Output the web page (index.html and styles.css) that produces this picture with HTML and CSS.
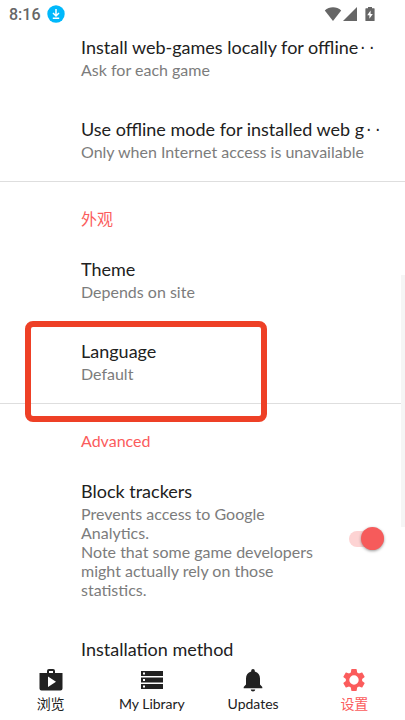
FILE: index.html
```html
<!DOCTYPE html>
<html lang="zh-CN">
<head>
    <meta charset="UTF-8">
    <meta name="viewport" content="width=device-width, initial-scale=1.0">
    <title>设置</title>
    <link rel="stylesheet" href="styles.css">
</head>
<body>
    <header class="status-bar">
        <span class="clock">8:16</span>
        <svg class="download-icon" viewBox="0 0 18 18" aria-hidden="true">
            <circle cx="9" cy="9" r="8.7" fill="#00b8fb"/>
            <path d="M9 4v6.5M6 8l3 3 3-3M5.8 13.2h6.4" fill="none" stroke="#fff" stroke-width="1.5"/>
        </svg>
        <div class="status-icons">
            <svg width="18" height="16" viewBox="0 0 18 16" aria-hidden="true">
                <path d="M9 15 .8 4.400C3 2.200 6 1.200 9 1.200s6 1 8.200 3.200z"/>
            </svg>
            <svg width="16" height="16" viewBox="0 0 16 16" aria-hidden="true">
                <path d="M15 1v14H1z"/>
            </svg>
            <svg class="battery-icon" width="10" height="16" viewBox="0 0 10 16" aria-hidden="true">
                <path d="M1 2.200h2V1h4v1.200h2q.6 0 .6.6v11.600q0 .6-.6.6H1q-.6 0-.6-.6V2.800q0-.6.6-.6z"/>
                <path d="M5.600 4.500 2.200 9.300h2.200v3.500L7.800 8H5.600z" fill="#fff"/>
            </svg>
        </div>
    </header>

    <main class="settings">
        <div class="settings-list">
            <section class="group">
                <div class="item">
                    <div class="item-text">
                        <h3 class="item-title">Install web-games locally for offline<span class="more">··</span></h3>
                        <p class="item-summary">Ask for each game</p>
                    </div>
                </div>
                <div class="item">
                    <div class="item-text">
                        <h3 class="item-title">Use offline mode for installed web g<span class="more">··</span></h3>
                        <p class="item-summary">Only when Internet access is unavailable</p>
                    </div>
                </div>
            </section>

            <section class="group">
                <h2 class="group-title">外观</h2>
                <div class="item">
                    <div class="item-text">
                        <h3 class="item-title">Theme</h3>
                        <p class="item-summary">Depends on site</p>
                    </div>
                </div>
                <div class="item item-marked">
                    <div class="item-text">
                        <h3 class="item-title">Language</h3>
                        <p class="item-summary">Default</p>
                    </div>
                </div>
            </section>

            <section class="group">
                <h2 class="group-title">Advanced</h2>
                <div class="item">
                    <div class="item-text">
                        <h3 class="item-title"><label for="block-trackers">Block trackers</label></h3>
                        <p class="item-summary">Prevents access to Google Analytics.<br>Note that some game developers might actually rely on those statistics.</p>
                    </div>
                    <input class="switch" type="checkbox" role="switch" id="block-trackers" checked>
                </div>
                <div class="item">
                    <div class="item-text">
                        <h3 class="item-title">Installation method</h3>
                    </div>
                </div>
            </section>
        </div>
        <div class="scrollbar"></div>
    </main>

    <nav class="tabs">
        <a class="tab" href="#browse">
            <svg viewBox="0 0 24 24" aria-hidden="true">
                <path fill-rule="evenodd" d="M8 5V3q0-2 2-2h4q2 0 2 2v2h7.500v15.500q0 2-2 2h-19q-2 0-2-2V5zM10 5h4V3h-4zM9 8.500v10.500l8-5.200z"/>
            </svg>
            浏览
        </a>
        <a class="tab" href="#library">
            <svg viewBox="0 0 24 24" aria-hidden="true">
                <path fill-rule="evenodd" d="M1 3h22v5H1zM3 4.500v2h2v-2zM1 9.500h22v5H1zM3 11v2h2v-2zM1 16h22v5H1zM3 17.500v2h2v-2z"/>
            </svg>
            My Library
        </a>
        <a class="tab" href="#updates">
            <svg viewBox="0 0 24 24" aria-hidden="true">
                <path d="M12 23.500c1.200 0 2.200-.8 2.200-2H9.800c0 1.200 1 2 2.200 2zM19 16.500V10.500c0-3.500-1.900-6.200-5.200-7V2.800a1.800 1.800 0 0 0-3.600 0v.7C6.900 4.300 5 7 5 10.500v6l-2.300 2.600v1.200h18.600v-1.200z"/>
            </svg>
            Updates
        </a>
        <a class="tab tab-active" href="#settings" aria-current="page">
            <svg viewBox="1 1 22 22" aria-hidden="true">
                <path d="M19.430 12.980c.04-.32.07-.64.07-.98s-.03-.66-.07-.98l2.110-1.650c.19-.15.24-.42.12-.64l-2-3.460c-.12-.22-.39-.3-.61-.22l-2.490 1c-.52-.4-1.080-.73-1.690-.98l-.38-2.650A.49.49 0 0 0 14 2h-4c-.25 0-.46.18-.49.42l-.38 2.650c-.61.25-1.170.59-1.690.98l-2.490-1c-.23-.09-.49 0-.61.22l-2 3.460c-.13.22-.07.49.12.64l2.110 1.650c-.04.32-.07.65-.07.98s.03.66.07.98l-2.110 1.650c-.19.15-.24.42-.12.64l2 3.460c.12.22.39.3.61.22l2.490-1c.52.4 1.080.73 1.690.98l.38 2.650c.03.24.24.42.49.42h4c.25 0 .46-.18.49-.42l.38-2.650c.61-.25 1.170-.59 1.690-.98l2.490 1c.23.09.49 0 .61-.22l2-3.460c.12-.22.07-.49-.12-.64zM12 16.300a4.300 4.300 0 1 1 0-8.600 4.300 4.300 0 0 1 0 8.600z"/>
            </svg>
            设置
        </a>
    </nav>
</body>
</html>
```

FILE: styles.css
```css
*,
*::before,
*::after {
    margin: 0;
    padding: 0;
    box-sizing: border-box;
}

body {
    font-family: Lato, 'Noto Sans CJK SC', sans-serif;
    background: #fff;
    color: #212121;
    height: 100vh;
    display: flex;
    flex-direction: column;
    overflow: hidden;
}

.status-bar {
    display: flex;
    align-items: center;
    height: 28px;
    padding: 0 30px 0 9px;
    gap: 6px;
    flex-shrink: 0;
}

.clock {
    font-family: Roboto, sans-serif;
    font-size: 16px;
    font-weight: 500;
    color: #666;
}

.download-icon {
    width: 18px;
    height: 18px;
}

.status-icons {
    display: flex;
    margin-left: auto;
    fill: #666;
}

.battery-icon {
    margin-left: 7px;
}

.settings {
    position: relative;
    flex: 1;
    min-height: 0;
    overflow: hidden;
}

/* list is scrolled a little under the status bar */
.settings-list {
    margin-top: -11px;
}

.group + .group {
    border-top: 1px solid #dedede;
}

.group-title {
    padding: 27px 24px 10px 81px;
    font-size: 16px;
    font-weight: 400;
    line-height: 20px;
    color: #fb5c5c;
}

.item {
    display: flex;
    align-items: center;
    gap: 24px;
    padding: 17px 21px 20px 81px;
}

.item-text {
    flex: 1;
    min-width: 0;
}

.item-title {
    font-size: 18px;
    font-weight: 400;
    line-height: 26px;
    white-space: nowrap;
}

.more {
    font-family: 'Liberation Mono', monospace;
    font-size: 15px;
    line-height: 1;
    vertical-align: 2px;
}

.item-summary {
    font-size: 16px;
    line-height: 19px;
    color: #7c7c7c;
}

.item-marked {
    position: relative;
}

.item-marked::after {
    content: "";
    position: absolute;
    top: 0;
    left: 25px;
    width: 242px;
    height: 101px;
    border: 6px solid #ee4026;
    border-radius: 8px;
    z-index: 1;
}

.switch {
    appearance: none;
    position: relative;
    flex-shrink: 0;
    width: 35px;
    height: 16px;
    border-radius: 8px;
    background: #fdd3d3;
    cursor: pointer;
}

.switch::after {
    content: "";
    position: absolute;
    top: -4px;
    left: 0;
    width: 23px;
    height: 23px;
    border-radius: 50%;
    background: #f65b5b;
    box-shadow: 0 1px 3px rgba(0, 0, 0, 0.4);
}

.switch:checked::after {
    left: 12px;
}

.scrollbar {
    position: absolute;
    top: 247px;
    right: 0;
    width: 4px;
    height: 252px;
    background: #f5f5f5;
}

.tabs {
    display: flex;
    flex-shrink: 0;
    height: 60px;
    background: #fff;
}

.tab {
    flex: 1;
    display: flex;
    flex-direction: column;
    align-items: center;
    padding-top: 8px;
    gap: 4px;
    font-size: 14px;
    line-height: 16px;
    color: #212121;
    text-decoration: none;
}

.tab svg {
    width: 24px;
    height: 24px;
    fill: currentColor;
}

.tab-active {
    color: #fb5c5c;
}
```
